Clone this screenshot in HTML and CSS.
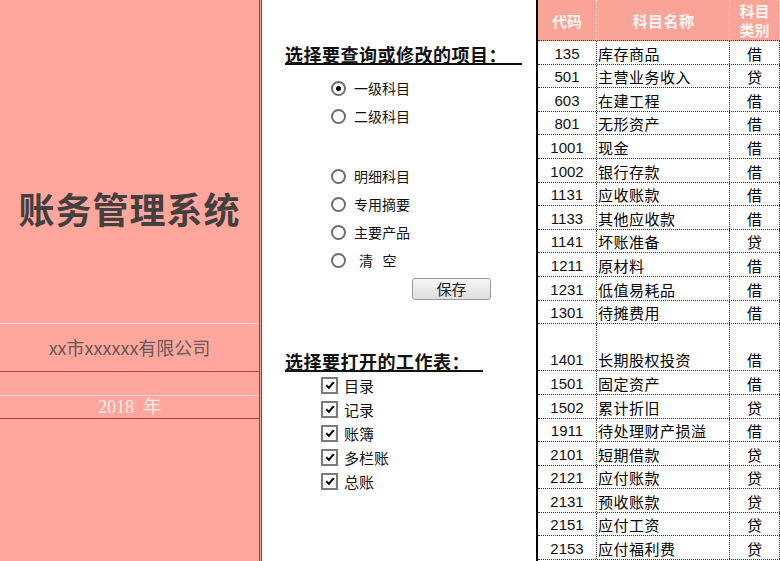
FILE: index.html
```html
<!DOCTYPE html>
<html lang="zh-CN">
<head>
<meta charset="utf-8">
<title>账务管理系统</title>
<link rel="stylesheet" href="styles.css">
</head>
<body>
<div class="app">
  <aside class="brand">
    <div class="brand-top"><h1 class="title">账务管理系统</h1></div>
    <div class="company">xx市xxxxxx有限公司</div>
    <div class="gap"></div>
    <div class="year">2018&nbsp; 年</div>
    <div class="brand-rest"></div>
  </aside>

  <main class="form">
    <h2 class="heading heading-q1">选择要查询或修改的项目：</h2>
    <ul class="radios">
      <li class="opt"><span class="radio checked"></span><span class="opt-text">一级科目</span></li>
      <li class="opt"><span class="radio"></span><span class="opt-text">二级科目</span></li>
      <li class="opt opt-gap"><span class="radio"></span><span class="opt-text">明细科目</span></li>
      <li class="opt"><span class="radio"></span><span class="opt-text">专用摘要</span></li>
      <li class="opt"><span class="radio"></span><span class="opt-text">主要产品</span></li>
      <li class="opt"><span class="radio"></span><span class="opt-text opt-clear">清&nbsp;&nbsp;&nbsp;空</span></li>
    </ul>
    <div class="btn-row"><button class="btn" type="button">保存</button></div>

    <h2 class="heading heading-q2">选择要打开的工作表：</h2>
    <ul class="checks">
      <li class="chk"><span class="box"><svg viewBox="0 0 12 12" width="12" height="12"><path d="M2.2 6.2 L4.8 8.8 L9.8 3.2" fill="none" stroke="#000" stroke-width="2"/></svg></span><span class="chk-text">目录</span></li>
      <li class="chk"><span class="box"><svg viewBox="0 0 12 12" width="12" height="12"><path d="M2.2 6.2 L4.8 8.8 L9.8 3.2" fill="none" stroke="#000" stroke-width="2"/></svg></span><span class="chk-text">记录</span></li>
      <li class="chk"><span class="box"><svg viewBox="0 0 12 12" width="12" height="12"><path d="M2.2 6.2 L4.8 8.8 L9.8 3.2" fill="none" stroke="#000" stroke-width="2"/></svg></span><span class="chk-text">账簿</span></li>
      <li class="chk"><span class="box"><svg viewBox="0 0 12 12" width="12" height="12"><path d="M2.2 6.2 L4.8 8.8 L9.8 3.2" fill="none" stroke="#000" stroke-width="2"/></svg></span><span class="chk-text">多栏账</span></li>
      <li class="chk"><span class="box"><svg viewBox="0 0 12 12" width="12" height="12"><path d="M2.2 6.2 L4.8 8.8 L9.8 3.2" fill="none" stroke="#000" stroke-width="2"/></svg></span><span class="chk-text">总账</span></li>
    </ul>
  </main>

  <section class="ledger">
    <div class="row head">
      <div class="cell c-code">代码</div>
      <div class="cell c-name">科目名称</div>
      <div class="cell c-type">科目<br>类别</div>
    </div>
    <div class="row"><div class="cell c-code">135</div><div class="cell c-name">库存商品</div><div class="cell c-type">借</div></div>
    <div class="row"><div class="cell c-code">501</div><div class="cell c-name">主营业务收入</div><div class="cell c-type">贷</div></div>
    <div class="row"><div class="cell c-code">603</div><div class="cell c-name">在建工程</div><div class="cell c-type">借</div></div>
    <div class="row"><div class="cell c-code">801</div><div class="cell c-name">无形资产</div><div class="cell c-type">借</div></div>
    <div class="row"><div class="cell c-code">1001</div><div class="cell c-name">现金</div><div class="cell c-type">借</div></div>
    <div class="row"><div class="cell c-code">1002</div><div class="cell c-name">银行存款</div><div class="cell c-type">借</div></div>
    <div class="row"><div class="cell c-code">1131</div><div class="cell c-name">应收账款</div><div class="cell c-type">借</div></div>
    <div class="row"><div class="cell c-code">1133</div><div class="cell c-name">其他应收款</div><div class="cell c-type">借</div></div>
    <div class="row"><div class="cell c-code">1141</div><div class="cell c-name">坏账准备</div><div class="cell c-type">贷</div></div>
    <div class="row"><div class="cell c-code">1211</div><div class="cell c-name">原材料</div><div class="cell c-type">借</div></div>
    <div class="row"><div class="cell c-code">1231</div><div class="cell c-name">低值易耗品</div><div class="cell c-type">借</div></div>
    <div class="row"><div class="cell c-code">1301</div><div class="cell c-name">待摊费用</div><div class="cell c-type">借</div></div>
    <div class="row tall"><div class="cell c-code">1401</div><div class="cell c-name">长期股权投资</div><div class="cell c-type">借</div></div>
    <div class="row"><div class="cell c-code">1501</div><div class="cell c-name">固定资产</div><div class="cell c-type">借</div></div>
    <div class="row"><div class="cell c-code">1502</div><div class="cell c-name">累计折旧</div><div class="cell c-type">贷</div></div>
    <div class="row"><div class="cell c-code">1911</div><div class="cell c-name">待处理财产损溢</div><div class="cell c-type">借</div></div>
    <div class="row"><div class="cell c-code">2101</div><div class="cell c-name">短期借款</div><div class="cell c-type">贷</div></div>
    <div class="row"><div class="cell c-code">2121</div><div class="cell c-name">应付账款</div><div class="cell c-type">贷</div></div>
    <div class="row"><div class="cell c-code">2131</div><div class="cell c-name">预收账款</div><div class="cell c-type">贷</div></div>
    <div class="row"><div class="cell c-code">2151</div><div class="cell c-name">应付工资</div><div class="cell c-type">贷</div></div>
    <div class="row"><div class="cell c-code">2153</div><div class="cell c-name">应付福利费</div><div class="cell c-type">贷</div></div>
  </section>
</div>
</body>
</html>
```

FILE: styles.css
```css
* { box-sizing: border-box; }

html, body {
  margin: 0;
  padding: 0;
  background: #ffffff;
}

body {
  font-family: "Noto Sans CJK SC", "Noto Sans", sans-serif;
  color: #111;
}

.app {
  display: flex;
  width: 780px;
  height: 561px;
  overflow: hidden;
}

/* ---------- left brand panel ---------- */
.brand {
  width: 262px;
  flex: none;
  display: flex;
  flex-direction: column;
  background: #ffa79d;
  border-right: 3px double #b52f27;
}

.brand-top {
  height: 324px;
  padding-top: 186px;
  border-bottom: 1px solid #ffd3cd;
}

.title {
  margin: 0;
  height: 44px;
  line-height: 44px;
  text-align: center;
  font-size: 36px;
  font-weight: 700;
  letter-spacing: 1px;
  color: #444040;
}

.company {
  height: 48px;
  line-height: 47px;
  text-align: center;
  font-size: 18px;
  color: #675a58;
  border-bottom: 1px solid #c23b32;
}

.gap {
  height: 24px;
  border-bottom: 1px solid #ffd3cd;
}

.year {
  height: 23px;
  line-height: 22px;
  text-align: center;
  font-family: "Liberation Serif", "Noto Sans CJK SC", serif;
  font-size: 18px;
  color: #ffeeea;
  border-bottom: 1px solid #c23b32;
}

.brand-rest { flex: 1; }

/* ---------- middle form ---------- */
.form {
  width: 274px;
  flex: none;
  padding-left: 23px;
}

.heading {
  margin: 0;
  font-size: 18px;
  line-height: 18px;
  font-weight: 700;
  letter-spacing: 0.5px;
  color: #111;
  border-bottom: 2px solid #111;
  white-space: nowrap;
}

.heading-q1 { margin-top: 45px; width: 237px; }
.heading-q2 { margin-top: 52px; width: 198px; }

.radios, .checks {
  list-style: none;
  margin: 0;
  padding: 0;
}

.radios { margin-top: 9px; padding-left: 46px; }

.opt {
  display: flex;
  align-items: center;
  height: 28px;
}

.opt-gap { margin-top: 32px; }

.radio {
  position: relative;
  width: 15px;
  height: 15px;
  border: 2px solid #6e6e6e;
  border-radius: 50%;
  background: #fff;
  flex: none;
}

.radio.checked::after {
  content: "";
  position: absolute;
  left: 3px;
  top: 3px;
  width: 5px;
  height: 5px;
  border-radius: 50%;
  background: #000;
}

.opt-text {
  margin-left: 8px;
  font-size: 14px;
  color: #111;
}

.opt-clear { padding-left: 5px; }

.btn-row {
  margin-top: 4px;
  padding-left: 127px;
}

.btn {
  display: block;
  width: 79px;
  height: 22px;
  padding: 0;
  border: 1px solid #9a9a9a;
  border-radius: 3px;
  background: linear-gradient(#f6f6f6, #dedede);
  font-family: "Noto Sans CJK SC", sans-serif;
  font-size: 15px;
  line-height: 20px;
  color: #222;
}

.checks { margin-top: 1px; padding-left: 36px; }

.chk {
  display: flex;
  align-items: center;
  height: 24px;
}

.box {
  width: 17px;
  height: 17px;
  border: 2px solid #7a7a7a;
  background: #fff;
  display: flex;
  align-items: center;
  justify-content: center;
  flex: none;
}

.chk-text {
  margin-left: 6px;
  font-size: 15px;
  color: #111;
}

/* ---------- right ledger table ---------- */
.ledger {
  width: 244px;
  flex: none;
  border-left: 2px solid #000;
}

.row {
  display: grid;
  grid-template-columns: 59px 133px 50px;
  height: 23.6px;
  border-bottom: 1px dotted #333;
}

.row.tall { height: 47.2px; }

.cell {
  display: flex;
  align-items: flex-end;
  border-right: 1px dotted #333;
  line-height: 20px;
  font-size: 15px;
  color: #000;
  white-space: nowrap;
  overflow: hidden;
}

.c-code {
  justify-content: center;
  font-family: "Liberation Sans", "Noto Sans", sans-serif;
  font-size: 15px;
  color: #111;
}

.c-name {
  padding-left: 1px;
  letter-spacing: 0.5px;
}

.c-type { justify-content: center; }

.row.head {
  height: 41px;
  background: #f9a497;
  border-bottom: 1px dotted #333;
}

.row.head .cell {
  align-items: center;
  justify-content: center;
  text-align: center;
  font-family: "Noto Sans CJK SC", sans-serif;
  font-weight: 700;
  font-size: 15px;
  line-height: 19px;
  color: #fff6f3;
  border-right: 1px dotted #fde0da;
}
```
